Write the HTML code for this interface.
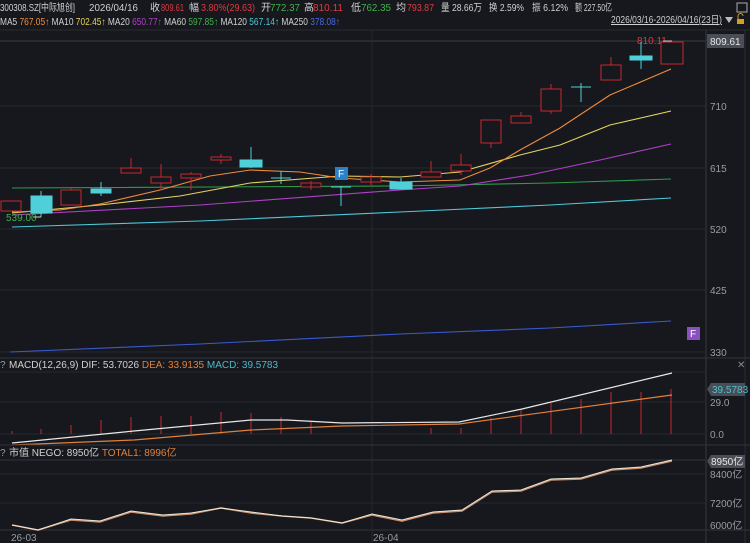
<!DOCTYPE html>
<html><head><meta charset="utf-8"><style>
html,body{margin:0;padding:0;background:#16181d;width:750px;height:543px;overflow:hidden}
svg{display:block}
text{font-family:"Liberation Sans","Noto Sans CJK SC",sans-serif;font-size:10px}
</style></head><body>
<svg width="750" height="543" viewBox="0 0 750 543">
<rect width="750" height="543" fill="#16181d"/>
<!-- header -->
<text x="0" y="11" fill="#d0d0d0" font-size="10" textLength="75" lengthAdjust="spacingAndGlyphs">300308.SZ[中际旭创]</text>
<text x="89" y="11" fill="#d0d0d0" font-size="10" textLength="49" lengthAdjust="spacingAndGlyphs">2026/04/16</text>
<text x="150" y="11" fill="#d0d0d0" font-size="9.5">收</text><text x="161" y="11" fill="#e0393e" font-size="10" textLength="23" lengthAdjust="spacingAndGlyphs">809.61</text>
<text x="189" y="11" fill="#d0d0d0" font-size="9.5">幅</text><text x="201" y="11" fill="#e0393e" font-size="10" textLength="54" lengthAdjust="spacingAndGlyphs">3.80%(29.63)</text>
<text x="261" y="11" fill="#d0d0d0" font-size="9.5">开</text><text x="270" y="11" fill="#3fb24a" font-size="10" textLength="30" lengthAdjust="spacingAndGlyphs">772.37</text>
<text x="304" y="11" fill="#d0d0d0" font-size="9.5">高</text><text x="313" y="11" fill="#e0393e" font-size="10" textLength="30" lengthAdjust="spacingAndGlyphs">810.11</text>
<text x="351" y="11" fill="#d0d0d0" font-size="9.5">低</text><text x="361" y="11" fill="#3fb24a" font-size="10" textLength="30" lengthAdjust="spacingAndGlyphs">762.35</text>
<text x="396" y="11" fill="#d0d0d0" font-size="9.5">均</text><text x="407" y="11" fill="#e0393e" font-size="10" textLength="27" lengthAdjust="spacingAndGlyphs">793.87</text>
<text x="441" y="11" fill="#d0d0d0" font-size="10" textLength="41" lengthAdjust="spacingAndGlyphs">量 28.66万</text>
<text x="489" y="11" fill="#d0d0d0" font-size="10" textLength="35" lengthAdjust="spacingAndGlyphs">换 2.59%</text>
<text x="532" y="11" fill="#d0d0d0" font-size="10" textLength="36" lengthAdjust="spacingAndGlyphs">振 6.12%</text>
<text x="575" y="11" fill="#d0d0d0" font-size="10" textLength="37" lengthAdjust="spacingAndGlyphs">额 227.50亿</text>
<rect x="737" y="3" width="10" height="9" fill="none" stroke="#aaa" stroke-width="1"/>
<text x="0" y="25" fill="#d0d0d0" font-size="10" textLength="340" lengthAdjust="spacingAndGlyphs">MA5 <tspan fill="#f08c3c">767.05↑</tspan> MA10 <tspan fill="#e6d260">702.45↑</tspan> MA20 <tspan fill="#b040c8">650.77↑</tspan> MA60 <tspan fill="#3fb24a">597.85↑</tspan> MA120 <tspan fill="#4fc8d8">567.14↑</tspan> MA250 <tspan fill="#4a6ae0">378.08↑</tspan></text>
<text x="611" y="23" fill="#d0d0d0" font-size="10" text-decoration="underline" textLength="111" lengthAdjust="spacingAndGlyphs">2026/03/16-2026/04/16(23日)</text>
<path d="M725 17 L733 17 L729 23 Z" fill="#bbb"/>
<rect x="737" y="19" width="7" height="5" fill="#d4a020"/>
<path d="M738 19 v-3 a2.5 2.5 0 0 1 5 0" fill="none" stroke="#d4a020"/>
<line x1="0" y1="30" x2="750" y2="30" stroke="#2a2d33"/>
<!-- grid main -->
<g stroke="#24272d" stroke-width="1">
<line x1="0" y1="41" x2="706" y2="41" stroke="#3a3d44"/>
<line x1="0" y1="106" x2="706" y2="106"/>
<line x1="0" y1="168" x2="706" y2="168"/>
<line x1="0" y1="229" x2="706" y2="229"/>
<line x1="0" y1="290" x2="706" y2="290"/>
<line x1="0" y1="352" x2="706" y2="352"/>
<line x1="372" y1="30" x2="372" y2="543"/>
<line x1="706" y1="30" x2="706" y2="543" stroke="#34373e"/>
<line x1="745" y1="30" x2="745" y2="543" stroke="#2a2d33"/>
</g>
<g fill="#9a9ca2">
<text x="710" y="110">710</text><text x="710" y="172">615</text><text x="710" y="233">520</text><text x="710" y="294">425</text><text x="710" y="356">330</text>
</g>
<rect x="707" y="34" width="37" height="14" fill="#4a4d55"/>
<text x="710" y="45" fill="#e8e8e8">809.61</text>
<text x="637" y="44" fill="#e0393e" font-size="9.5">810.11</text>
<line x1="663" y1="41" x2="672" y2="41" stroke="#ccc"/>
<!-- MA lines -->
<g fill="none" stroke-width="1.1">
<polyline stroke="#3a5ad0" points="10,352 200,344 400,334 550,328 671,321"/>
<polyline stroke="#4fc8d8" points="12,227 200,221 400,212 550,205 671,198"/>
<polyline stroke="#2f9a4a" points="12,188 400,186 550,183 671,179"/>
<polyline stroke="#b040c8" points="12,215 200,205 400,190 460,186 530,175 600,160 671,144"/>
<polyline stroke="#e6d260" points="12,213 100,205 180,196 250,183 340,176 400,177 460,172 520,155 560,145 610,125 671,111"/>
<polyline stroke="#f08c3c" points="12,212 60,210 100,204 160,190 210,176 250,170 300,172 340,178 400,182 460,180 490,168 520,150 560,128 610,95 671,69"/>
</g>
<!-- candles -->
<g stroke-width="1">
<g stroke="#c8282e" fill="#16181d">
<rect x="1" y="201" width="20" height="10"/>
<line x1="71" y1="188" x2="71" y2="190"/><rect x="61" y="190" width="20" height="15"/>
<line x1="131" y1="158" x2="131" y2="168"/><rect x="121" y="168" width="20" height="5"/>
<line x1="161" y1="164" x2="161" y2="177"/><line x1="161" y1="183" x2="161" y2="190"/><rect x="151" y="177" width="20" height="6"/>
<line x1="191" y1="172" x2="191" y2="190"/><rect x="181" y="174" width="20" height="4"/>
<line x1="221" y1="154" x2="221" y2="164"/><rect x="211" y="157" width="20" height="3"/>
<rect x="301" y="183" width="20" height="4"/><line x1="311" y1="181" x2="311" y2="190"/>
<rect x="361" y="177" width="20" height="5"/><line x1="371" y1="174" x2="371" y2="185"/>
<line x1="431" y1="161" x2="431" y2="172"/><rect x="421" y="172" width="20" height="5"/>
<line x1="461" y1="154" x2="461" y2="165"/><line x1="461" y1="171" x2="461" y2="175"/><rect x="451" y="165" width="20" height="6"/>
<rect x="481" y="120" width="20" height="23"/><line x1="491" y1="143" x2="491" y2="148"/>
<line x1="521" y1="112" x2="521" y2="116"/><rect x="511" y="116" width="20" height="7"/>
<line x1="551" y1="84" x2="551" y2="89"/><line x1="551" y1="111" x2="551" y2="114"/><rect x="541" y="89" width="20" height="22"/>
<line x1="611" y1="57" x2="611" y2="65"/><rect x="601" y="65" width="20" height="15"/>
<rect x="661" y="42" width="22" height="22"/>
</g>
<g stroke="#4fd0d8" fill="#4fd0d8">
<line x1="41" y1="191" x2="41" y2="217"/><rect x="31" y="196" width="21" height="17"/>
<line x1="101" y1="182" x2="101" y2="196"/><rect x="91" y="189" width="20" height="4"/>
<line x1="251" y1="147" x2="251" y2="168"/><rect x="240" y="160" width="22" height="7"/>
<line x1="281" y1="171" x2="281" y2="184"/><line x1="271" y1="178" x2="291" y2="178"/>
<line x1="341" y1="186" x2="341" y2="206"/><line x1="331" y1="187" x2="351" y2="187"/>
<rect x="390" y="182" width="22" height="7"/><line x1="401" y1="178" x2="401" y2="182"/>
<line x1="581" y1="83" x2="581" y2="102"/><line x1="571" y1="87" x2="591" y2="87"/>
<line x1="641" y1="42" x2="641" y2="69"/><rect x="630" y="56" width="22" height="4"/>
</g>
</g>
<text x="6" y="221" fill="#3fb24a" font-size="9">539.00</text>
<line x1="33" y1="217" x2="41" y2="217" stroke="#ccc"/>
<rect x="335" y="167" width="13" height="13" fill="#2a82c8"/>
<text x="338" y="177" fill="#fff">F</text>
<rect x="687" y="327" width="13" height="13" fill="#8a50c0"/>
<text x="690" y="337" fill="#fff">F</text>
<!-- MACD panel -->
<line x1="0" y1="358" x2="750" y2="358" stroke="#30333a"/>
<text x="0" y="368" fill="#9a9ca2" font-size="9">?</text>
<text x="9" y="368" fill="#d0d0d0" font-size="9.5">MACD(12,26,9) DIF: 53.7026 <tspan fill="#e0803a">DEA: 33.9135</tspan> <tspan fill="#4fb8c8">MACD: 39.5783</tspan></text>
<text x="737" y="368" fill="#888" font-size="11">✕</text>
<line x1="0" y1="372" x2="706" y2="372" stroke="#24272d"/>
<line x1="0" y1="402" x2="706" y2="402" stroke="#24272d"/>
<line x1="0" y1="434" x2="706" y2="434" stroke="#24272d"/>
<g stroke="#c8282e" stroke-width="1">
<line x1="12" y1="431" x2="12" y2="434"/><line x1="41" y1="429" x2="41" y2="434"/><line x1="71" y1="425" x2="71" y2="434"/>
<line x1="101" y1="420" x2="101" y2="434"/><line x1="131" y1="417" x2="131" y2="434"/><line x1="161" y1="416" x2="161" y2="434"/>
<line x1="191" y1="416" x2="191" y2="434"/><line x1="221" y1="412" x2="221" y2="434"/><line x1="251" y1="413" x2="251" y2="434"/>
<line x1="281" y1="417" x2="281" y2="434"/><line x1="311" y1="422" x2="311" y2="434"/><line x1="431" y1="428" x2="431" y2="434"/>
<line x1="461" y1="428" x2="461" y2="434"/><line x1="491" y1="418" x2="491" y2="434"/><line x1="521" y1="410" x2="521" y2="434"/>
<line x1="551" y1="403" x2="551" y2="434"/><line x1="581" y1="399" x2="581" y2="434"/><line x1="611" y1="392" x2="611" y2="434"/>
<line x1="641" y1="392" x2="641" y2="434"/><line x1="671" y1="389" x2="671" y2="434"/>
</g>
<polyline fill="none" stroke="#e8e8e8" stroke-width="1.2" points="12,443 134,431 251,420 287,420 342,423 459,422 522,409 672,373"/>
<polyline fill="none" stroke="#e0803a" stroke-width="1.2" points="12,445 134,440 251,430 342,426 459,424 672,395"/>
<path d="M707 389 l4 -6 h34 v13 h-34 z" fill="#4a4d55"/>
<text x="712" y="393" fill="#4fc0d0" font-size="9.5">39.5783</text>
<text x="710" y="406" fill="#9a9ca2" font-size="9.5">29.0</text>
<text x="710" y="438" fill="#9a9ca2" font-size="9.5">0.0</text>
<!-- NEGO panel -->
<line x1="0" y1="445" x2="750" y2="445" stroke="#30333a"/>
<text x="0" y="456" fill="#9a9ca2" font-size="9">?</text>
<text x="9" y="456" fill="#d0d0d0" font-size="9.5">市值 NEGO: 8950亿 <tspan fill="#e0803a">TOTAL1: 8996亿</tspan></text>
<line x1="0" y1="460" x2="706" y2="460" stroke="#30333a"/>
<line x1="0" y1="474" x2="706" y2="474" stroke="#24272d"/>
<line x1="0" y1="503" x2="706" y2="503" stroke="#24272d"/>
<line x1="0" y1="530" x2="750" y2="530" stroke="#30333a"/>
<polyline fill="none" stroke="#c89070" stroke-width="1.6" points="12,525 38,530 71,520 100,522 131,512 163,516 191,514 221,508 251,513 282,516 311,518 342,523 372,515 402,521 433,513 462,511 492,492 521,491 551,480 581,479 612,470 641,468 672,461"/>
<polyline fill="none" stroke="#f0e8d8" stroke-width="1" points="12,525 38,530 71,519 100,521 131,511 163,515 191,513 221,508 251,512 282,516 311,518 342,523 372,514 402,520 433,512 462,510 492,491 521,490 551,479 581,478 612,469 641,467 672,460"/>
<path d="M707 461 l4 -6 h34 v13 h-34 z" fill="#4a4d55"/>
<text x="711" y="465" fill="#e8e8e8" font-size="9.5">8950亿</text>
<text x="710" y="478" fill="#9a9ca2" font-size="9.5">8400亿</text>
<text x="710" y="507" fill="#9a9ca2" font-size="9.5">7200亿</text>
<text x="710" y="529" fill="#9a9ca2" font-size="9.5">6000亿</text>
<text x="11" y="541" fill="#9a9ca2" font-size="9">26-03</text>
<text x="373" y="541" fill="#9a9ca2" font-size="9">26-04</text>
</svg>
</body></html>
